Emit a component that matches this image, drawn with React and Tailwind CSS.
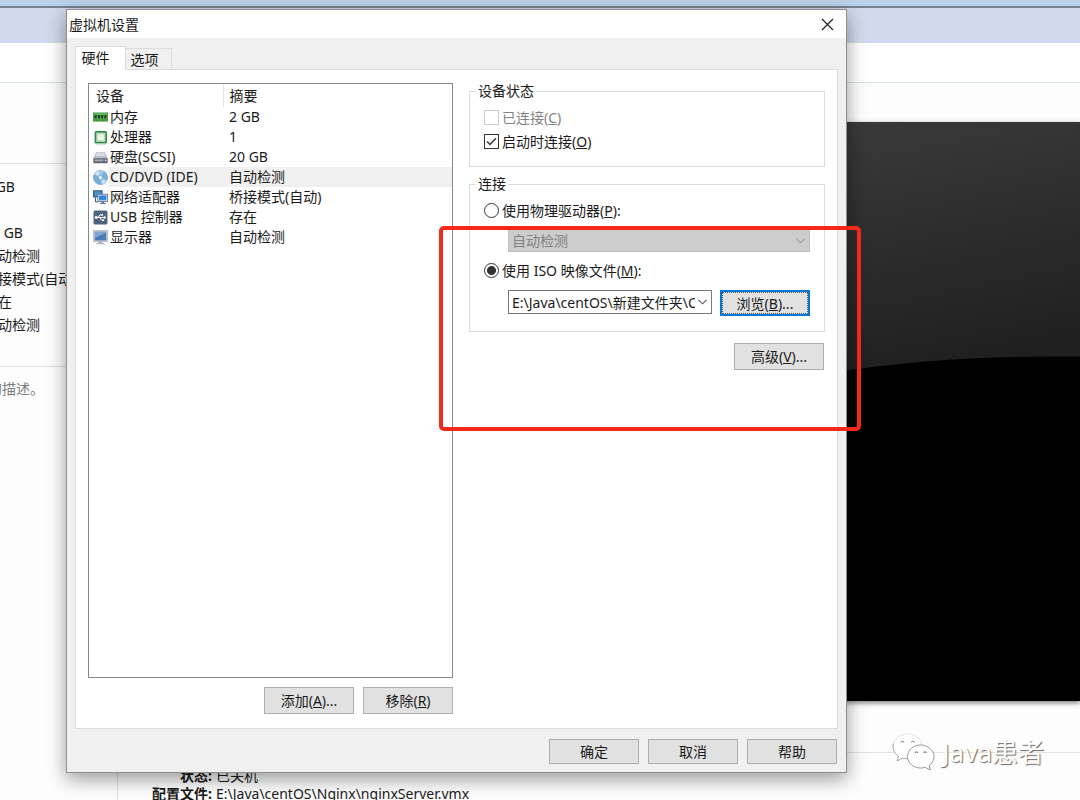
const FONT = "font-['Noto_Sans','Noto_Sans_CJK_SC',sans-serif]";

function MemoryIcon() {
  return (
    <svg viewBox="0 0 15 15" className="w-[15px] h-[15px]">
      <rect x="0" y="2.500" width="15" height="9" fill="#3f9a3f" />
      <rect x="0.800" y="3.300" width="13.400" height="6" fill="#62b85c" />
      <path d="M1.500 5h2.500l-.5 3.500H1.200zM4.800 5h2.500l-.5 3.500H4.500zM8.100 5h2.500l-.5 3.500H7.800zM11.400 5h2.400l-.4 3.500h-2.300z" fill="#1f4a24" />
      <path d="M1 11h1v1H1zM3 11h1v1H3zM5 11h1v1H5zM8 11h1v1H8zM10 11h1v1h-1zM12 11h1v1h-1z" fill="#a9a55a" />
    </svg>
  );
}

function CpuIcon() {
  return (
    <svg viewBox="0 0 15 15" className="w-[15px] h-[15px]">
      <rect x="2.300" y="1.800" width="11" height="11" rx="0.8" fill="#8fd09a" stroke="#2f8a45" strokeWidth="1.400" />
      <rect x="4.300" y="3.800" width="7" height="7" fill="#eef1ea" stroke="#c4d8c4" strokeWidth="0.8" />
      <path d="M3 14.200h10" stroke="#b8d6bd" strokeWidth="0.8" />
    </svg>
  );
}

function DiskIcon() {
  return (
    <svg viewBox="0 0 15 15" className="w-[15px] h-[15px]">
      <path d="M3.200 2h8.600l2.900 6.500H.3z" fill="#b4bac3" />
      <path d="M3.800 2.600h7.400l1.400 3.600H2.400z" fill="#dadee3" />
      <path d="M.3 8.300h14.400v4q0 .9-.9.9H1.200q-.9 0-.9-.9z" fill="#5f6672" />
      <path d="M1.500 9.500h9v1.800h-9z" fill="#a7adb7" />
      <circle cx="12.600" cy="10.500" r="0.9" fill="#d7dbe0" />
    </svg>
  );
}

function DiscIcon() {
  return (
    <svg viewBox="0 0 15 15" className="w-[15px] h-[15px]">
      <circle cx="7.500" cy="7.500" r="7" fill="#79afd9" stroke="#6a9bc4" strokeWidth="0.7" />
      <path d="M7.500 7.500 1.600 4.200A7 7 0 0 1 6 .8zM7.500 7.500l5.900 3.300A7 7 0 0 1 9 14.200z" fill="#cfe5f5" />
      <path d="M7.500 7.500 6 .8a7 7 0 0 1 5 .8z" fill="#a7cdea" />
      <circle cx="7.500" cy="7.500" r="2.600" fill="#bfdcf1" stroke="#5b92c0" strokeWidth="0.7" />
      <circle cx="7.500" cy="7.500" r="1" fill="#fff" />
    </svg>
  );
}

function NetworkIcon() {
  return (
    <svg viewBox="0 0 15 15" className="w-[15px] h-[15px]">
      <rect x="0.600" y="0.800" width="8.500" height="6.200" fill="#4a90cf" stroke="#35506e" strokeWidth="1" />
      <path d="M2.500 7.500v4.300H5" fill="none" stroke="#4a617c" strokeWidth="1.100" />
      <rect x="4.900" y="4.200" width="9.700" height="7.400" fill="#e6edf4" stroke="#5c6f85" strokeWidth="0.8" />
      <rect x="6.100" y="5.400" width="7.300" height="5" fill="#2f86dc" />
      <path d="M8.600 11.700h2.600v1.200h1.600v1.200H7v-1.200h1.600z" fill="#66788e" />
    </svg>
  );
}

function UsbIcon() {
  return (
    <svg viewBox="0 0 15 15" className="w-[15px] h-[15px]">
      <rect x="0.500" y="0.500" width="14" height="14" rx="1.500" fill="#4f6481" />
      <path d="M3 7.500h8M5 7.500l2-2.600h2M6.500 7.500l2 2.600h1.400" fill="none" stroke="#fff" strokeWidth="1" />
      <circle cx="3.200" cy="7.500" r="1.400" fill="#fff" />
      <path d="M11 5.800 13.300 7.500 11 9.200z" fill="#fff" />
      <circle cx="9.200" cy="4.900" r="0.9" fill="#fff" />
      <path d="M9.200 9.200H11V11H9.200z" fill="#fff" />
    </svg>
  );
}

function DisplayIcon() {
  return (
    <svg viewBox="0 0 15 15" className="w-[15px] h-[15px]">
      <rect x="0.400" y="0.600" width="14.200" height="11" fill="#c7d0da" stroke="#a3afbd" strokeWidth="0.6" />
      <rect x="1.800" y="1.800" width="11.400" height="8.600" fill="#4a7ab2" />
      <path d="M1.800 1.800h11.400v1L1.800 8z" fill="#7fa5d0" />
      <path d="M5.500 11.600h4v1.300h2V14.300h-8v-1.400h2z" fill="#a9b3c0" />
    </svg>
  );
}

function Chevron() {
  return (
    <svg viewBox="0 0 9 6" className="w-[9px] h-[6px] pointer-events-none">
      <path d="M0.500 0.800 4.500 4.800 8.500 0.800" fill="none" stroke="currentColor" strokeWidth="1.100" />
    </svg>
  );
}

function WechatLogo() {
  return (
    <svg viewBox="0 0 44 40" className="w-[44px] h-10">
      <g fill="#fff" strokeWidth="0.9">
        <path
          d="M16.500 2C8.500 2 2 7.500 2 14.500c0 4 2.200 7.500 5.500 9.800L6 29l5.500-2.900c1.600.4 3.300.7 5 .7 8 0 14.500-5.500 14.500-12.300S24.500 2 16.500 2z"
          stroke="#e2e2e2"
        />
        <path d="M2.400 11.500C1.200 17 3.300 21.500 7.500 24.300L6 29l5.500-2.900 4.500.6" fill="none" stroke="#a3a3a3" />
        <path
          d="M29.500 13C22.500 13 16.500 18 16.500 24.500S22.500 36 29.500 36c1.600 0 3-.3 4.400-.7L39.500 38l-1.400-4.300c2.900-2 4.900-5.400 4.900-9.200C43 18 36.500 13 29.500 13z"
          stroke="#8f8f8f"
        />
      </g>
      <path
        d="M9.500 10.500q1.800-2.600 3.600 0M20 10.500q1.800-2.600 3.600 0M24 21q1.500-2.200 3 0M32.500 21q1.500-2.200 3 0"
        fill="none"
        stroke="#8a8a8a"
        strokeWidth="1.100"
      />
    </svg>
  );
}

const devices = [
  { name: "内存", summary: "2 GB", icon: MemoryIcon },
  { name: "处理器", summary: "1", icon: CpuIcon },
  { name: "硬盘(SCSI)", summary: "20 GB", icon: DiskIcon },
  { name: "CD/DVD (IDE)", summary: "自动检测", icon: DiscIcon, selected: true },
  { name: "网络适配器", summary: "桥接模式(自动)", icon: NetworkIcon },
  { name: "USB 控制器", summary: "存在", icon: UsbIcon },
  { name: "显示器", summary: "自动检测", icon: DisplayIcon },
];

function Button({ children, className = "h-[27px]" }) {
  return (
    <button type="button" className={`w-[90px] flex items-center justify-center bg-[#e1e1e1] border border-[#adadad] ${className}`}>
      {children}
    </button>
  );
}

function Choice({ type, name, disabled, defaultChecked, children }) {
  const shape =
    type === "radio"
      ? "rounded-full border-[#333] checked:bg-[radial-gradient(circle,#333_0_4px,#fff_5px)]"
      : "border-[#333] disabled:border-[#ccc]";
  return (
    <label className={`h-6 flex items-center gap-[3px] ${disabled ? "text-[#838383]" : ""}`}>
      <span className="relative flex">
        <input
          type={type}
          name={name}
          disabled={disabled}
          defaultChecked={defaultChecked}
          className={`peer appearance-none w-[15px] h-[15px] border bg-white ${shape}`}
        />
        {type === "checkbox" && (
          <svg viewBox="0 0 15 15" className="absolute inset-0 hidden peer-checked:block pointer-events-none">
            <path d="M3 7.500 6 10.500 12 4.200" fill="none" stroke="#333" strokeWidth="1.400" />
          </svg>
        )}
      </span>
      <span>{children}</span>
    </label>
  );
}

// VMware main window that the dialog sits on
function Backdrop() {
  return (
    <div className="h-full flex flex-col">
      <div className="h-[6px] shrink-0 bg-[#bad3eb]"></div>
      <div className="h-[2px] shrink-0 bg-[#75828f]"></div>
      <div className="h-[35px] shrink-0 bg-[#d3d9ec]"></div>
      <div className="h-10 shrink-0 bg-white border-b border-[#d3e0e8]"></div>
      <div className="flex-1 flex min-h-0">
        <aside className="w-[117px] pt-20 overflow-hidden whitespace-nowrap">
          <ul className="h-[204px] -ml-4 pt-[11px] border-y border-[#dfdfdf] leading-[23px]">
            {devices.map((d) => (
              <li key={d.name}>{d.summary}</li>
            ))}
          </ul>
          <p className="-ml-3 pt-3 leading-5 text-[#7c7c7c]">的描述。</p>
        </aside>
        <main className="flex-1 border-l border-[#dbe3ee] pt-[39px]">
          <div className="h-[579px] bg-black shadow-[0_2px_5px_rgba(0,0,0,0.5)] flex justify-end">
            <svg viewBox="0 0 240 580" preserveAspectRatio="none" className="w-[240px] h-full">
              <defs>
                <linearGradient id="glare" x1="0" y1="0" x2="0.200" y2="1">
                  <stop offset="0" stopColor="#3a3a3a" />
                  <stop offset="1" stopColor="#202020" />
                </linearGradient>
              </defs>
              <path d="M0 0H240V235Q110 233 0 250z" fill="url(#glare)" />
            </svg>
          </div>
          <dl className="mt-[51px] border-t border-[#e3e3e3] pt-[14px] grid grid-cols-[94px_1fr] gap-x-1 leading-[18px]">
            <dt className="text-right font-bold">状态:</dt>
            <dd>已关机</dd>
            <dt className="text-right font-bold">配置文件:</dt>
            <dd>E:\Java\centOS\Nginx\nginxServer.vmx</dd>
          </dl>
        </main>
      </div>
    </div>
  );
}

function DeviceTable() {
  return (
    <div className="flex-1 bg-white border border-[#828790]">
      <table className="w-full table-fixed text-left leading-5">
        <colgroup>
          <col className="w-[20px]" />
          <col className="w-[114px]" />
          <col />
        </colgroup>
        <thead>
          <tr className="h-[23px]">
            <th colSpan={2} className="pl-[7px] font-normal border-r border-[#e5e5e5]">设备</th>
            <th className="pl-[6px] font-normal">摘要</th>
          </tr>
        </thead>
        <tbody>
          {devices.map((d) => (
            <tr key={d.name} className="h-5">
              <td className="pl-1">
                <d.icon />
              </td>
              <td className={d.selected ? "pl-px bg-[#f0f0f0]" : "pl-px"}>{d.name}</td>
              <td className={d.selected ? "pl-[6px] bg-[#f0f0f0]" : "pl-[6px]"}>{d.summary}</td>
            </tr>
          ))}
        </tbody>
      </table>
    </div>
  );
}

function SettingsPane() {
  return (
    <div className="relative w-[356px]">
      <fieldset className="border border-[#dcdcdc] px-[14px] pt-[6px] pb-[13px]">
        <legend className="-ml-2 px-[2px] leading-4">设备状态</legend>
        <Choice type="checkbox" disabled>
          已连接(<u>C</u>)
        </Choice>
        <Choice type="checkbox" defaultChecked>
          启动时连接(<u>O</u>)
        </Choice>
      </fieldset>

      <fieldset className="mt-[9px] border border-[#dcdcdc] px-[14px] pt-[6px] pb-[15px]">
        <legend className="-ml-2 px-[2px] leading-4">连接</legend>
        <Choice type="radio" name="source">
          使用物理驱动器(<u>P</u>):
        </Choice>
        <div className="relative mt-[7px] ml-6 flex items-center text-[#838383]">
          <select disabled aria-label="物理驱动器" className="appearance-none w-full h-[23px] px-[3px] bg-[#ccc] border border-[#bfbfbf] opacity-100">
            <option>自动检测</option>
          </select>
          <span className="absolute right-[5px] text-[#a0a0a0]">
            <Chevron />
          </span>
        </div>
        <div className="mt-[6px]">
          <Choice type="radio" name="source" defaultChecked>
            使用 ISO 映像文件(<u>M</u>):
          </Choice>
        </div>
        <div className="mt-2 ml-6 flex gap-2">
          <div className="relative flex-1 h-6 flex items-center">
            <select aria-label="ISO 映像文件" className="appearance-none w-full h-6 pl-[3px] pr-4 bg-white border border-[#7a7a7a]">
              <option>E:\Java\centOS\新建文件夹\CentOS.iso</option>
            </select>
            <span className="absolute right-[5px] text-[#555]">
              <Chevron />
            </span>
          </div>
          <button type="button" className="w-[90px] h-[26px] bg-[#e1e1e1] border-2 border-[#0078d7] p-px">
            <span className="h-full flex items-center justify-center outline-1 outline-dotted outline-[#555]">
              浏览(<u>B</u>)...
            </span>
          </button>
        </div>
      </fieldset>

      <div className="mt-[11px] pr-px flex justify-end">
        <Button>
          高级(<u>V</u>)...
        </Button>
      </div>

      {/* Red callout */}
      <div className="absolute -left-[30px] -right-[36px] top-[143px] h-[205px] border-4 border-[#f3281b] rounded-[5px] pointer-events-none"></div>
    </div>
  );
}

export default function App() {
  return (
    <div className={`relative h-screen overflow-hidden bg-[#fdfdfd] text-[14px] text-[#1a1a1a] ${FONT}`}>
      <Backdrop />

      <div className="absolute inset-0 pt-[9px] pb-[27px] pl-[66px] pr-[233px] flex">
        <section
          role="dialog"
          aria-label="虚拟机设置"
          className="flex-1 flex flex-col bg-[#f0f0f0] border border-[#8f8f88] shadow-[0_6px_18px_rgba(0,0,0,0.4)]"
        >
          <header className="h-7 shrink-0 bg-white flex items-center justify-between pl-[2px] pr-3">
            <h1>虚拟机设置</h1>
            <button type="button" aria-label="关闭">
              <svg viewBox="0 0 13 13" className="w-[13px] h-[13px]">
                <path d="M1 1 12 12M12 1 1 12" stroke="#222" strokeWidth="1.200" />
              </svg>
            </button>
          </header>

          <div className="flex-1 min-h-0 flex flex-col px-2 pt-2 pb-2">
            <div role="tablist" className="flex items-end">
              <button type="button" role="tab" aria-selected="true" className="relative -mb-px w-[51px] h-6 pr-3 pb-[2px] bg-white border border-b-0 border-[#dcdcdc]">
                <span className="block whitespace-nowrap pl-[2px]">硬件</span>
              </button>
              <button type="button" role="tab" aria-selected="false" className="w-[46px] h-[21px] pr-2 pb-px border border-l-0 border-b-0 border-[#dcdcdc]">
                选项
              </button>
            </div>

            <div className="flex-1 min-h-0 flex gap-4 bg-white border border-[#dcdcdc] px-3 pt-[13px] pb-[14px]">
              <div className="flex-1 flex flex-col gap-[9px]">
                <DeviceTable />
                <div className="flex justify-end gap-[9px]">
                  <Button>
                    添加(<u>A</u>)...
                  </Button>
                  <Button>
                    移除(<u>R</u>)
                  </Button>
                </div>
              </div>
              <SettingsPane />
            </div>

            <footer className="pt-[10px] pr-px flex justify-end gap-[9px]">
              <Button className="h-[25px]">确定</Button>
              <Button className="h-[25px]">取消</Button>
              <Button className="h-[25px]">帮助</Button>
            </footer>
          </div>
        </section>
      </div>

      {/* Account watermark */}
      <div className="absolute right-9 bottom-7 flex items-center gap-2">
        <WechatLogo />
        <span className="text-[26px] leading-10 text-white [text-shadow:1px_1px_1px_#666]">Java患者</span>
      </div>
    </div>
  );
}
